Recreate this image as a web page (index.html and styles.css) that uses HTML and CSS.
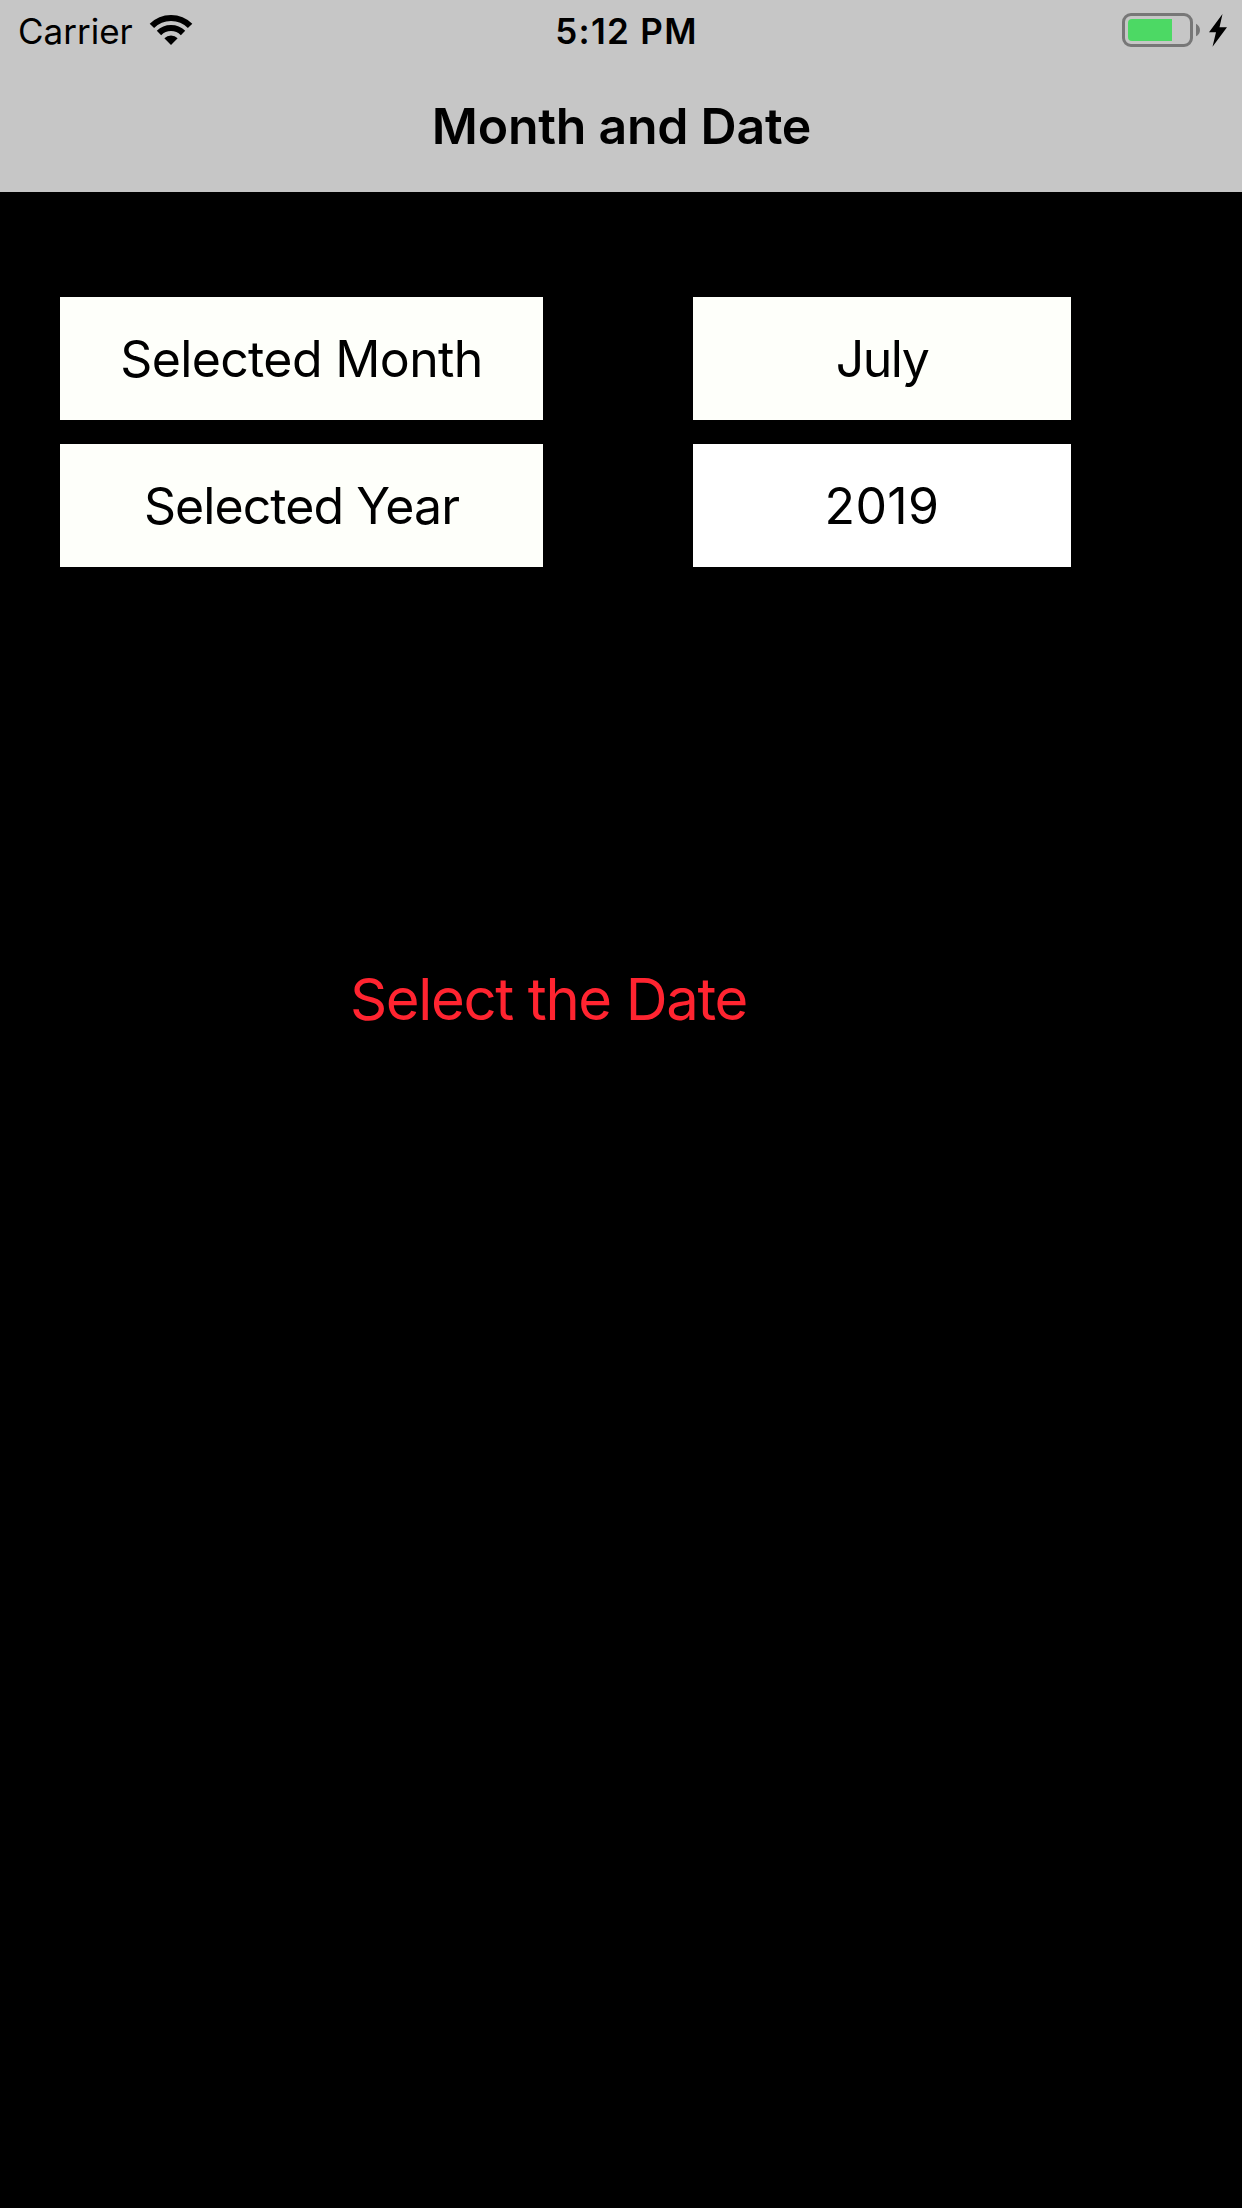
FILE: index.html
```html
<!DOCTYPE html>
<html lang="en">
<head>
<meta charset="utf-8">
<title>Month and Date</title>
<link rel="stylesheet" href="styles.css">
</head>
<body>
<header class="header">
  <div class="status-bar">
    <div class="status-left">
      <span class="carrier">Carrier</span>
      <svg class="wifi" width="44" height="32" viewBox="0 0 44 32">
        <path class="arc" d="M2.900 11.900A27 27 0 0 1 41.100 11.900"/>
        <path class="arc" d="M9.980 18.980A17 17 0 0 1 34.020 18.980"/>
        <path d="M15.350 24.350A9.400 9.400 0 0 1 28.650 24.350L22 31Z"/>
      </svg>
    </div>
    <span class="time">5:12 PM</span>
    <div class="status-right">
      <svg width="107" height="36" viewBox="0 0 107 36">
        <rect class="shell" x="1.500" y="2.500" width="68" height="31" rx="7.500"/>
        <path class="level" d="M10 7H50V29H10A4 4 0 0 1 6 25V11A4 4 0 0 1 10 7Z"/>
        <path class="cap" d="M74 11.700C79.300 14.200 79.300 21.800 74 24.300Z"/>
        <path class="bolt" d="M100.500 2L87 20.200H94L90.500 34.700L105 15.200H97.500Z"/>
      </svg>
    </div>
  </div>
  <h1 class="title">Month and Date</h1>
</header>
<main class="content">
  <div class="fields">
    <div class="field month-label">Selected Month</div>
    <div class="field month">July</div>
    <div class="field year-label">Selected Year</div>
    <div class="field year">2019</div>
  </div>
  <p class="prompt">Select the Date</p>
</main>
</body>
</html>
```
FILE: styles.css
```css
* { box-sizing: border-box; }
body { margin: 0; min-height: 2208px; background: #000; color: #000; font-family: Inter, sans-serif; }
.header { height: 192px; background: #c6c6c6; }
.status-bar { height: 60px; display: grid; grid-template-columns: 1fr auto 1fr; }
.status-left { display: flex; align-items: flex-start; padding: 10px 0 0 18px; gap: 16px; }
.carrier, .time { font-size: 35px; line-height: 42px; }
.wifi { margin-top: 4px; }
.arc { fill: none; stroke: #000; stroke-width: 6.2; }
.time { font-weight: 600; padding: 10px 0 0 11px; letter-spacing: 1.3px; }
.status-right { display: flex; justify-content: flex-end; padding: 12px 13px 0 0; }
.shell { fill: none; stroke: #777; stroke-width: 3; }
.cap { fill: #777; }
.level { fill: #4cd964; }
.title { margin: 36px 0 0; padding-left: 1px; font-size: 50px; line-height: 60px; font-weight: 600; letter-spacing: -0.25px; text-align: center; }
.content { padding: 105px 0 0 60px; }
.fields { display: grid; grid-template-columns: 483px 378px; grid-auto-rows: 123px; gap: 24px 150px; }
.field { display: flex; align-items: center; justify-content: center; background: #fefffa; font-size: 50px; line-height: 60px; }
.month-label { letter-spacing: -0.63px; }
.month { letter-spacing: -1.5px; }
.year-label { letter-spacing: -0.94px; }
.year { background: #fff; letter-spacing: 0.35px; }
.prompt { margin: 396px 0 0 290px; color: #ff2430; font-size: 58px; line-height: 72px; letter-spacing: -1.36px; }
```
